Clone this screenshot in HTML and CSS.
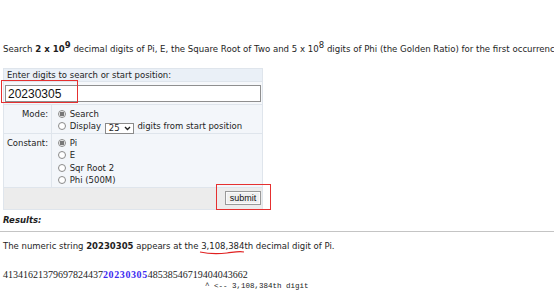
FILE: index.html
```html
<!DOCTYPE html>
<html lang="en">
  <head>
    <meta charset="UTF-8" />
    <meta name="viewport" content="width=device-width, initial-scale=1.0" />
    <title>Pi Search</title>
    <link rel="stylesheet" href="styles.css">
  </head>
  <body>
    <p class="intro">
      Search <b>2 x 10<sup>9</sup></b> decimal digits of Pi, E, the Square Root of Two and 5 x 10<sup>8</sup> digits of Phi (the Golden Ratio) for the first occurrence
    </p>

    <form class="searchform">
      <table class="search">
        <tr>
          <td colspan="2" class="head">Enter digits to search or start position:</td>
        </tr>
        <tr>
          <td colspan="2" class="inputcell">
            <input type="text" class="digits" value="20230305" />
            <span class="mark mark-input"></span>
          </td>
        </tr>
        <tr>
          <td class="label">Mode:</td>
          <td class="opts">
            <label><input type="radio" name="mode" checked /> Search</label>
            <label><input type="radio" name="mode" /> Display <span class="sel">25<svg width="7" height="5" viewBox="0 0 7 5"><path d="M1 1 L3.5 3.5 L6 1" fill="none" stroke="#222" stroke-width="1.4"/></svg></span> digits from start position</label>
          </td>
        </tr>
        <tr>
          <td class="label">Constant:</td>
          <td class="opts four">
            <label><input type="radio" name="c" checked /> Pi</label>
            <label><input type="radio" name="c" /> E</label>
            <label><input type="radio" name="c" /> Sqr Root 2</label>
            <label><input type="radio" name="c" /> Phi (500M)</label>
          </td>
        </tr>
        <tr>
          <td colspan="2" class="submitcell">
            <button type="button" class="submit">submit</button>
            <span class="mark mark-submit"></span>
          </td>
        </tr>
      </table>
    </form>

    <div class="results">
      <div class="rtitle">Results:</div>
      <hr />
      <p class="found">
        The numeric string <b>20230305</b> appears at the
        <span class="pos">3,108,384th<svg class="squiggle" width="46" height="5" viewBox="0 0 46 5"><path d="M1 2 C10 4, 20 4, 28 3 S40 1, 45 2" fill="none" stroke="#e02020" stroke-width="1.2"/></svg></span>
        decimal digit of Pi.
      </p>
      <div class="digitline">41341621379697824437<b>20230305</b>48538546719404043662</div>
      <div class="pointer">^ &lt;-- 3,108,384th digit</div>
    </div>
  </body>
</html>
```

FILE: styles.css
```css
body {
  margin: 0;
  padding: 0 3px;
  font-family: "DejaVu Sans", Verdana, sans-serif;
  font-size: 8.5px;
  color: #1e1e1e;
  background: #fff;
  overflow: hidden;
}
.intro {
  margin: 43px 0 0;
  font-size: 8.6px;
  line-height: 12px;
  white-space: nowrap;
}
.intro sup {
  font-size: 8.5px;
  line-height: 0;
  vertical-align: 4px;
}
.searchform {
  margin: 13px 0 0;
}
.search {
  border-collapse: collapse;
  width: 260px;
}
.search td {
  border: 1px solid #dfe5ec;
  background: #f3f6fa;
  padding: 0 3px;
  line-height: 12px;
}
.search .head {
  background: #eaf0f7;
  padding: 0 3px;
}
.search .inputcell {
  position: relative;
  padding: 3px 1px 2px;
  background: #f6f8fb;
}
.digits {
  display: block;
  box-sizing: border-box;
  width: 100%;
  height: 17px;
  margin: 0;
  padding: 0 2px;
  border: 1px solid #8f8f8f;
  border-radius: 0;
  font-family: "Liberation Sans", Arial, sans-serif;
  font-size: 12px;
  color: #111;
  background: #fff;
}
.search .label {
  width: 44px;
  text-align: right;
  vertical-align: top;
  padding: 3px 3px 0 0;
}
.search .opts {
  padding: 3px 2px 1px 6px;
}
.opts label {
  display: block;
  height: 12px;
  white-space: nowrap;
}
.opts.four label {
  height: 12.3px;
}
.opts input[type="radio"] {
  appearance: none;
  -webkit-appearance: none;
  width: 8px;
  height: 8px;
  margin: 0 1px 0 0;
  border: 1px solid #8a8a8a;
  border-radius: 50%;
  background: #fff;
  vertical-align: -1px;
  box-sizing: border-box;
}
.opts input[type="radio"]:checked {
  background: radial-gradient(circle, #777 0 2.2px, #fff 2.6px);
}
.sel {
  display: inline-block;
  box-sizing: border-box;
  width: 29px;
  height: 11px;
  line-height: 9px;
  padding: 0 0 0 3px;
  border: 1px solid #8a8a8a;
  background: #fff;
  vertical-align: -2px;
  margin: 0 1px;
}
.sel svg {
  float: right;
  margin: 2px 2px 0 0;
}
.search .submitcell {
  position: relative;
  background: #ececec;
  text-align: right;
  padding: 3px 1px 4px 0;
}
.submit {
  font-family: "Liberation Sans", Arial, sans-serif;
  font-size: 9px;
  line-height: 10px;
  padding: 1px 2px;
  width: 36px;
  color: #111;
  background: #f0f0f0;
  border: 1px solid #999;
  box-shadow: inset 0 0 0 1px #fafafa;
  border-radius: 0;
  cursor: pointer;
}
.mark {
  position: absolute;
  border: 1.5px solid #e53030;
  pointer-events: none;
}
.mark-input {
  left: -3px;
  top: -2px;
  width: 75px;
  height: 21px;
}
.mark-submit {
  right: -9px;
  top: -4px;
  width: 53px;
  height: 24px;
}
.results {
  margin-top: 4px;
}
.rtitle {
  font-weight: bold;
  font-style: italic;
  line-height: 12px;
}
.results hr {
  margin: 5px -3px 0;
  border: 0;
  border-top: 1px solid #c4c4c4;
}
.found {
  margin: 8px 0 0;
  line-height: 12px;
}
.pos {
  position: relative;
}
.squiggle {
  position: absolute;
  left: -2px;
  top: 9px;
}
.digitline {
  margin-top: 17px;
  font-family: "Liberation Serif", "Times New Roman", serif;
  font-size: 10px;
  line-height: 12px;
  color: #222;
}
.digitline b {
  color: #3d2bf0;
  letter-spacing: 0.6px;
}
.pointer {
  margin-left: 202px;
  font-family: "Liberation Mono", "Courier New", monospace;
  font-size: 7.5px;
  line-height: 10px;
  color: #222;
}
```
